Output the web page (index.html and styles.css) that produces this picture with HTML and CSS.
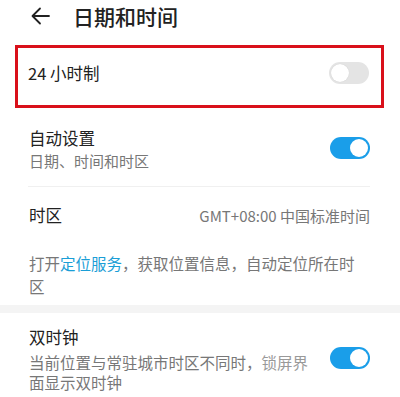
FILE: index.html
```html
<!DOCTYPE html>
<html lang="zh">
<head>
<meta charset="utf-8">
<link rel="stylesheet" href="styles.css">
</head>
<body>
<div class="page">
  <header class="header">
    <svg class="back" width="20" height="18" viewBox="0 0 20 18">
      <path d="M18 9H2M9 1.5L1.5 9L9 16.5" fill="none" stroke="#222" stroke-width="1.8" stroke-linecap="round" stroke-linejoin="round"/>
    </svg>
    <h1 class="title">日期和时间</h1>
  </header>

  <div class="highlight">
    <div class="row row-24">
      <span class="label">24 小时制</span>
      <span class="toggle off"><span class="knob"></span></span>
    </div>
  </div>

  <div class="row row-auto">
    <div class="texts">
      <div class="label">自动设置</div>
      <div class="sub">日期、时间和时区</div>
    </div>
    <span class="toggle on"><span class="knob"></span></span>
  </div>
  <div class="divider"></div>

  <div class="row row-tz">
    <span class="label">时区</span>
    <span class="value">GMT+08:00 中国标准时间</span>
  </div>

  <p class="hint">打开<span class="link">定位服务</span>，获取位置信息，自动定位所在时区</p>

  <div class="band"></div>

  <div class="row row-dual">
    <div class="texts">
      <div class="label">双时钟</div>
      <div class="sub">当前位置与常驻城市时区不同时，<span class="faded">锁屏界</span>面显示双时钟</div>
    </div>
    <span class="toggle on"><span class="knob"></span></span>
  </div>
</div>
</body>
</html>
```

FILE: styles.css
```css
* { box-sizing: border-box; }
html, body {
  margin: 0;
  padding: 0;
  background: #fff;
}
body {
  font-family: "Noto Sans CJK SC", "Noto Sans", sans-serif;
  color: #222;
  width: 400px;
  height: 397px;
  overflow: hidden;
}
.page {
  display: flex;
  flex-direction: column;
}
.header {
  display: flex;
  align-items: center;
  height: 32px;
  padding-left: 31px;
}
.back {
  display: block;
  margin-right: 22px;
}
.title {
  margin: 0;
  font-size: 21px;
  font-weight: 500;
  line-height: 30px;
  color: #222;
}
.highlight {
  margin: 13px 16px 0 15px;
  height: 63px;
  border: 3px solid #d9101a;
  display: flex;
  align-items: center;
  padding-bottom: 7px;
}
.row {
  display: flex;
  align-items: center;
  justify-content: space-between;
}
.row-24 {
  width: 100%;
  padding: 0 12px 0 10px;
}
.label {
  font-size: 16.5px;
  line-height: 22px;
  color: #222;
}
.sub {
  font-size: 15.5px;
  line-height: 21px;
  color: #777;
}
.toggle {
  flex: none;
  width: 40px;
  height: 22px;
  border-radius: 11px;
  position: relative;
  display: block;
}
.toggle .knob {
  position: absolute;
  top: 2px;
  width: 18px;
  height: 18px;
  border-radius: 50%;
  background: #fff;
}
.toggle.off { background: #e4e4e4; }
.toggle.off .knob { left: 2px; box-shadow: 0 0 1px rgba(0,0,0,0.15); }
.toggle.on { background: #1a9ee9; }
.toggle.on .knob { right: 2px; }

.row-auto {
  padding: 19px 30px 0 29px;
  height: 78px;
  align-items: flex-start;
}
.row-auto .sub { margin-top: 1px; font-size: 15px; }
.row-auto .toggle { margin-top: 10px; }
.divider {
  height: 1px;
  margin: 0 30px 0 28px;
  background: #f0f0f0;
}
.row-tz {
  height: 56px;
  padding: 0 30px 0 29px;
}
.value {
  font-size: 15px;
  color: #777;
}
.hint {
  margin: 0;
  padding: 9px 40px 0 29px;
  font-size: 15.5px;
  line-height: 23px;
  color: #777;
  height: 62px;
}
.link { color: #1a9ed6; }
.band {
  height: 8px;
  background: #f4f4f4;
}
.row-dual {
  padding: 13px 30px 0 29px;
  align-items: flex-start;
}
.row-dual .sub {
  width: 290px;
  line-height: 20px;
  margin-top: 4px;
}
.row-dual .toggle { margin-top: 21px; }
.faded { color: #999; }
```
